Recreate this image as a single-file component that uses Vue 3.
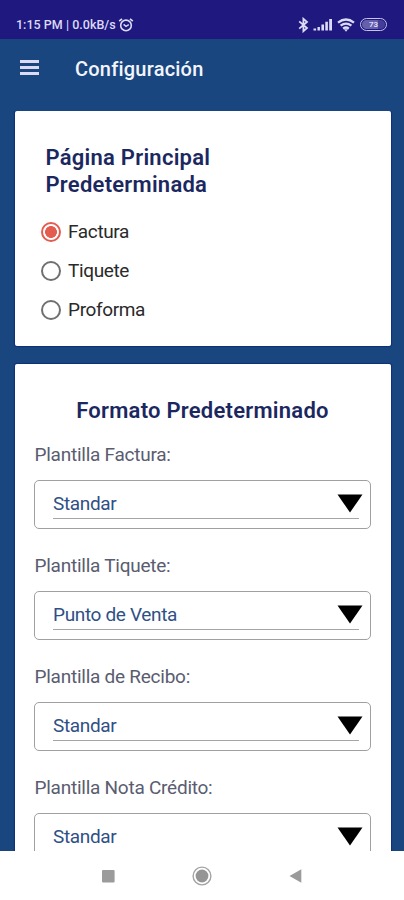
<script setup>
const pages = [
  { name: 'Factura', selected: true },
  { name: 'Tiquete', selected: false },
  { name: 'Proforma', selected: false }
]
const templates = [
  { label: 'Plantilla Factura:', value: 'Standar' },
  { label: 'Plantilla Tiquete:', value: 'Punto de Venta' },
  { label: 'Plantilla de Recibo:', value: 'Standar' },
  { label: 'Plantilla Nota Crédito:', value: 'Standar' }
]
</script>

<template>
  <div class="screen">
    <div class="status">
      <span class="time">1:15 PM | 0.0kB/s</span>
      <svg class="alarm" width="16" height="16" viewBox="0 0 16 16" fill="none" stroke="currentColor">
        <circle cx="8" cy="8.4" r="5.3" stroke-width="1.6" />
        <path d="M1.2 4.2 4 1.8M14.8 4.2 12 1.8" stroke-width="1.7" />
        <path d="M5.6 7.4 8 9.4l2.8-1.8" stroke-width="1.4" />
      </svg>
      <span class="grow"></span>
      <svg class="bt" width="11" height="16" viewBox="0 0 11 16" fill="none" stroke="currentColor" stroke-width="1.8">
        <path d="M1.2 4.4 9 11 5.4 14.2V1.8L9 5 1.2 11.6" />
      </svg>
      <svg class="signal" width="20" height="13" viewBox="0 0 20 13" fill="currentColor">
        <path d="M.5 10.4h2.6v2H.5zM4.5 9h2.4v3.4H4.5zM8.4 6.6h2.6v5.8H8.4zM12.3 3.8h2.6v8.6h-2.6zM16.2 1h2.8v11.4h-2.8z" />
      </svg>
      <svg class="wifi" width="18" height="14" viewBox="0 0 18 14" fill="none" stroke="currentColor" stroke-width="2.3">
        <path d="M1 4.6Q9-1.6 17 4.6M3.6 7.7q5.4-4.2 10.8 0M6.1 10.6q2.9-2.2 5.8 0" />
        <path d="M7 11.3h4l-2 2.4z" fill="currentColor" stroke="none" />
      </svg>
      <span class="battery"><span>73</span></span>
    </div>

    <header class="bar">
      <div class="menu"><i></i><i></i><i></i></div>
      <h1>Configuración</h1>
    </header>

    <main class="content">
      <section class="card pages">
        <h2>Página Principal<br />Predeterminada</h2>
        <div v-for="p in pages" :key="p.name" class="option">
          <span class="radio" :class="{ on: p.selected }"></span>
          <span>{{ p.name }}</span>
        </div>
      </section>

      <section class="card formats">
        <h2>Formato Predeterminado</h2>
        <div v-for="t in templates" :key="t.label" class="field">
          <div class="label">{{ t.label }}</div>
          <div class="select">
            <div class="value">{{ t.value }}</div>
            <svg class="arrow" width="26" height="19" viewBox="0 0 26 19"><path d="M.5.5h25L13 18.5z" /></svg>
          </div>
        </div>
      </section>
    </main>

    <nav class="nav">
      <svg width="13" height="13" viewBox="0 0 13 13"><rect width="12.6" height="12.6" rx="1" fill="#9b9b9b" /></svg>
      <svg width="20" height="20" viewBox="0 0 20 20">
        <circle cx="10" cy="10" r="8.9" fill="none" stroke="#a3a3a3" stroke-width="1.4" />
        <circle cx="10" cy="10" r="6.4" fill="#959595" />
      </svg>
      <svg width="13" height="14" viewBox="0 0 13 14"><path d="M.5 7 12.3.3v13.4z" fill="#9b9b9b" /></svg>
    </nav>
  </div>
</template>

<style>
body {
  margin: 0;
  overflow: hidden;
}
</style>

<style scoped>
.screen {
  width: 404px;
  height: 900px;
  display: flex;
  flex-direction: column;
  overflow: hidden;
  background: #19467f;
  font-family: Roboto, sans-serif;
}
.status {
  flex: none;
  box-sizing: border-box;
  height: 39px;
  padding: 10px 17px 0 16px;
  display: flex;
  align-items: center;
  background: #1e187f;
  color: #dcdaf5;
}
.time {
  font-size: 12.5px;
  font-weight: 500;
  letter-spacing: 0.02px;
  white-space: pre;
}
.alarm { margin-left: 2px; }
.grow { flex: 1; }
.bt { margin-right: 1px; }
.signal { margin-left: 3px; }
.wifi { margin-left: 4px; }
.battery {
  box-sizing: border-box;
  width: 27px;
  height: 13px;
  margin-left: 5px;
  border: 1.5px solid #c7c4ec;
  border-radius: 7px;
  padding: 1px;
  display: flex;
}
.battery span {
  flex: 1;
  border-radius: 5px;
  background: linear-gradient(90deg, #6660ac 70%, #453e99 70%);
  font-size: 8px;
  line-height: 9px;
  font-weight: 700;
  text-align: center;
}
.bar {
  flex: none;
  height: 72px;
  display: flex;
  align-items: flex-start;
  padding-left: 20px;
  color: #f3f5fc;
}
.menu {
  width: 19px;
  margin-top: 21px;
  display: flex;
  flex-direction: column;
  gap: 3px;
}
.menu i {
  height: 3px;
  background: #dcdaf5;
}
h1 {
  margin: 18px 0 0 36px;
  font-size: 20px;
  line-height: 24px;
  font-weight: 500;
  letter-spacing: 0.22px;
}
.content {
  flex: 1;
  min-height: 0;
  overflow: hidden;
  display: flex;
  flex-direction: column;
  gap: 18px;
  padding: 0 13px 0 15px;
}
.card {
  flex: none;
  background: #fff;
  border-radius: 2px;
  box-shadow: 0 0 1px 1px #102f78;
}
h2 {
  margin: 0;
  font-size: 22px;
  line-height: 27px;
  font-weight: 600;
  letter-spacing: 0.25px;
  color: #1b2860;
}
.pages {
  box-sizing: border-box;
  height: 235px;
  padding: 33px 26px 0;
}
.pages h2 {
  padding: 0 0 14px 4.5px;
}
.option {
  height: 39px;
  display: flex;
  align-items: center;
  gap: 7px;
  font-size: 19px;
  letter-spacing: -0.36px;
  color: #2a2a2a;
}
.radio {
  box-sizing: border-box;
  width: 20px;
  height: 20px;
  border: 2px solid #707070;
  border-radius: 50%;
}
.radio.on {
  border: 2px solid #e45b50;
  background: radial-gradient(circle, #e45b50 5.6px, #fff 6.2px);
}
.formats {
  height: 560px;
  padding: 33px 20px 0 19px;
}
.formats h2 {
  text-align: center;
  margin-bottom: 18px;
}
.field {
  height: 111px;
}
.label {
  height: 26px;
  line-height: 26px;
  font-size: 19px;
  letter-spacing: -0.25px;
  padding-left: 0.5px;
  color: #5a5c70;
}
.select {
  box-sizing: border-box;
  height: 49px;
  margin-top: 12px;
  border: 1.4px solid #a0a0a0;
  border-radius: 5px;
  padding: 9px 11px 9px 18px;
  position: relative;
}
.value {
  box-sizing: border-box;
  height: 29px;
  line-height: 27px;
  border-bottom: 1.5px solid #a5a5a5;
  font-size: 19px;
  letter-spacing: -0.34px;
  color: #2f5086;
}
.arrow {
  position: absolute;
  top: 13px;
  right: 7px;
  fill: #000;
}
.nav {
  flex: none;
  box-sizing: border-box;
  height: 49px;
  padding: 1px 102px 0;
  display: flex;
  align-items: center;
  justify-content: space-between;
  background: #fff;
}
</style>
